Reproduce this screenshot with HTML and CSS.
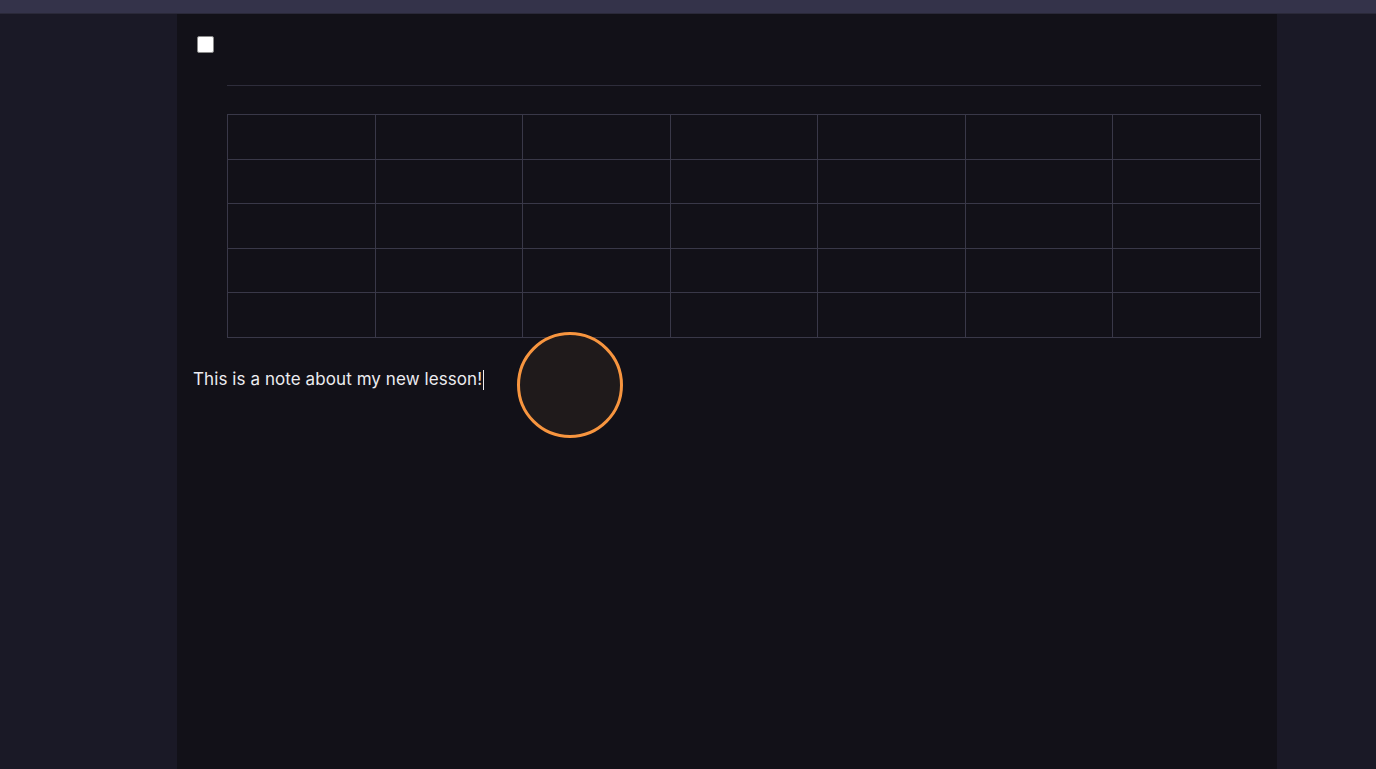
FILE: index.html
```html
<!DOCTYPE html>
<html lang="en">
<head>
<meta charset="UTF-8">
<meta name="viewport" content="width=device-width, initial-scale=1.0">
<title>Lesson notes</title>
<link rel="stylesheet" href="styles.css">
</head>
<body>

<div class="topbar"></div>

<div class="page">
  <div class="sheet">
    <div class="todo">
      <input type="checkbox" class="box">
    </div>

    <div class="block">
      <hr class="divider">

      <table class="grid">
        <tr><td></td><td></td><td></td><td></td><td></td><td></td><td></td></tr>
        <tr><td></td><td></td><td></td><td></td><td></td><td></td><td></td></tr>
        <tr><td></td><td></td><td></td><td></td><td></td><td></td><td></td></tr>
        <tr><td></td><td></td><td></td><td></td><td></td><td></td><td></td></tr>
        <tr><td></td><td></td><td></td><td></td><td></td><td></td><td></td></tr>
      </table>
    </div>

    <p class="note">This is a note about my new lesson!<span class="caret"></span></p>

    <!-- pointer highlight -->
    <div class="pointer"></div>
  </div>
</div>

</body>
</html>
```

FILE: styles.css
```css
body {
  margin: 0;
  background-color: #1a1926;
  font-family: Inter, "Noto Sans", sans-serif;
  color: #ececf0;
  height: 100vh;
  display: flex;
  flex-direction: column;
  overflow: hidden;
}
.topbar {
  height: 13px;
  background-color: #34334a;
  border-bottom: 1px solid #2a2939;
  flex-shrink: 0;
}
.page {
  flex: 1;
  display: flex;
  padding-left: 177px;
}
.sheet {
  position: relative;
  width: 1100px;
  box-sizing: border-box;
  background-color: #121118;
  padding: 22px 16px 0 16px;
}
.todo {
  padding-left: 4px;
  height: 17px;
}
.box {
  appearance: none;
  -webkit-appearance: none;
  width: 17px;
  height: 17px;
  margin: 0;
  display: block;
  background-color: #ffffff;
  border: 1px solid #8a8a8a;
  border-radius: 2px;
}
.block {
  margin-left: 34px;
}
.divider {
  border: none;
  border-top: 1px solid #2e2d3b;
  margin: 32px 0 28px 0;
}
.grid {
  width: 100%;
  border-collapse: collapse;
  table-layout: fixed;
}
.grid td {
  border: 1px solid #393848;
  height: 43.6px;
  padding: 0;
}
.note {
  margin: 30px 0 0 0;
  font-size: 17px;
  line-height: 22px;
  letter-spacing: 0.08px;
}
.caret {
  display: inline-block;
  width: 1px;
  height: 20px;
  background-color: #ececf0;
  vertical-align: -5px;
  margin-left: 1px;
}
.pointer {
  position: absolute;
  left: 340px;
  top: 318px;
  width: 100px;
  height: 100px;
  border: 3.5px solid #f7953f;
  border-radius: 50%;
  background-color: #1f1a1b;
}
```
